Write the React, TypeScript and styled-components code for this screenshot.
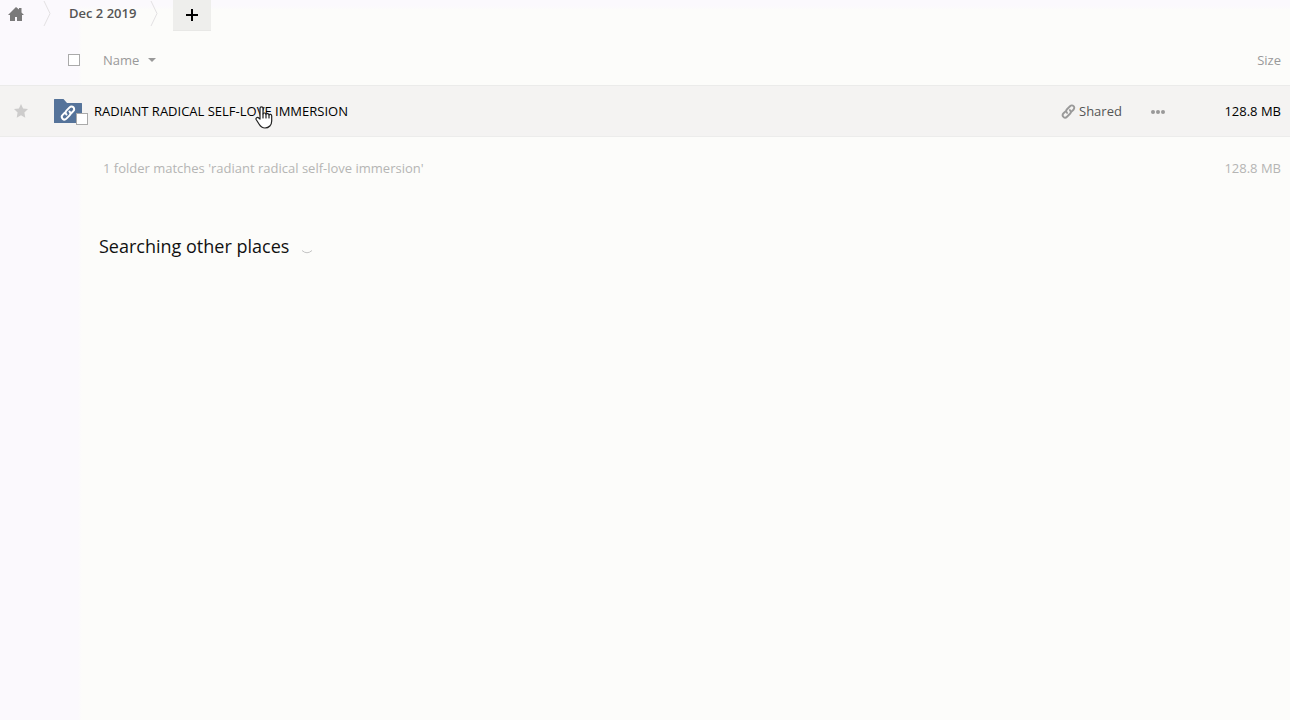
import React from 'react';
import styled, { createGlobalStyle } from 'styled-components';

const GlobalStyle = createGlobalStyle`
  * { box-sizing: border-box; }
  html { min-height: 100%; background: #fcfcfa; }
  body {
    margin: 0;
    min-height: 100vh;
    background: linear-gradient(90deg, #fbf9fd 0 78px, #fcfcfa 82px);
    color: #000;
    font: 13px/20px "Open Sans", "Noto Sans", sans-serif;
  }
`;

const Toolbar = styled.header`
  display: flex;
  align-items: flex-start;
  height: 36px;
  background: linear-gradient(180deg, #fbf9fd 0 6px, transparent 10px);
`;

const Breadcrumbs = styled.nav`
  display: flex;
  align-items: center;
  height: 28px;
`;

const CrumbLink = styled.a<{ $icon?: boolean }>`
  display: flex;
  align-items: center;
  padding: ${(p) => (p.$icon ? '0 19px 0 8px' : '0 14px 2px 16px')};
  color: #555;
  font-weight: 600;
  text-decoration: none;
`;

const AddButton = styled.button`
  display: flex;
  align-items: center;
  justify-content: center;
  width: 38px;
  height: 31px;
  margin-left: 13px;
  padding: 0;
  border: 0;
  border-bottom: 1px solid #e8e8e6;
  background: #eeeeec;
`;

const FileTable = styled.table`
  width: 100%;
  table-layout: fixed;
  border-collapse: separate;
  border-spacing: 0;
`;

const Col = styled.col<{ $width?: number }>`
  width: ${(p) => (p.$width ? `${p.$width}px` : 'auto')};
`;

const HeadCell = styled.th<{ $end?: boolean }>`
  height: 49px;
  padding: ${(p) => (p.$end ? '0 9px 2px 0' : '0 0 2px 14px')};
  color: #999;
  font-weight: 400;
  text-align: ${(p) => (p.$end ? 'right' : 'left')};
`;

const HeadContent = styled.div`
  display: flex;
  align-items: center;
  gap: 23px;
`;

const SortButton = styled.button`
  display: inline-flex;
  align-items: center;
  gap: 9px;
  padding: 0;
  border: 0;
  background: none;
  color: inherit;
  font: inherit;
`;

const Checkbox = styled.input`
  appearance: none;
  width: 12px;
  height: 12px;
  margin: 0;
  border: 1px solid #aaa;
  background: #fff;
`;

const FileRow = styled.tr`
  background: #f4f3f2;
`;

const Cell = styled.td<{ $end?: boolean }>`
  height: 52px;
  padding: ${(p) => (p.$end ? '0 9px 0 0' : '0')};
  border-top: 1px solid #ebebea;
  border-bottom: 1px solid #ececeb;
  text-align: ${(p) => (p.$end ? 'right' : 'left')};
`;

const IconButton = styled.button<{ $inset?: number }>`
  display: flex;
  margin: 0 0 0 ${(p) => p.$inset ?? 0}px;
  padding: 0;
  border: 0;
  background: none;
`;

const FileEntry = styled.div`
  display: flex;
  align-items: center;
  gap: 12px;
`;

const Thumbnail = styled.div`
  position: relative;
  display: flex;
  width: 28px;
`;

const ThumbnailCheckbox = styled(Checkbox)`
  position: absolute;
  left: 22px;
  top: 14px;
`;

const FileLink = styled.a`
  position: relative;
  color: #000;
  text-decoration: none;
`;

const Pointer = styled.svg`
  position: absolute;
  left: 161px;
  top: 5px;
`;

const ShareButton = styled.button`
  display: flex;
  align-items: center;
  gap: 3px;
  padding: 0;
  border: 0;
  background: none;
  color: #555;
  font: inherit;
`;

const SummaryCell = styled.td<{ $end?: boolean }>`
  height: 62px;
  padding: ${(p) => (p.$end ? '0 9px 0 0' : '0 0 0 49px')};
  color: #b5b5b4;
  text-align: ${(p) => (p.$end ? 'right' : 'left')};
`;

const SearchStatus = styled.section`
  display: flex;
  align-items: center;
  gap: 12px;
  padding: 35px 0 0 99px;
`;

const StatusTitle = styled.h2`
  margin: 0;
  color: #111;
  font-size: 18px;
  font-weight: 400;
  line-height: 24px;
`;

const Separator = () => (
  <svg width="10" height="28" viewBox="0 0 10 28" fill="none" stroke="#e3e1e3" aria-hidden="true">
    <path d="M1 1 7 13.5 1 26" />
  </svg>
);

const ChainLink = ({ size, color, weight }: { size: number; color: string; weight: number }) => (
  <svg width={size} height={size} viewBox="0 0 16 16" fill="none" stroke={color} strokeWidth={weight} strokeLinecap="round" aria-hidden="true">
    <path d="M6.5 9.5C5.2 8.2 5.4 6.6 6.4 5.6L9.6 2.4c1.2-1.2 2.8-1.1 3.8-.1s1.1 2.6-.1 3.8L11.2 8.2" />
    <path d="M9.5 6.5c1.3 1.3 1.1 2.9.1 3.9l-3.2 3.2c-1.2 1.2-2.8 1.1-3.8.1s-1.1-2.6.1-3.8l2.1-2.1" />
  </svg>
);

export default function App() {
  return (
    <>
      <GlobalStyle />
      <Toolbar>
        <Breadcrumbs aria-label="Breadcrumb">
          <CrumbLink $icon href="#home" aria-label="Home">
            <svg width="16" height="16" viewBox="0 0 16 16" fill="#7a7a7a" aria-hidden="true">
              <path d="M8 1 0 9h2v6h5v-4h2v4h5V9h2l-2.500-2.500V2h-2.500v1.500Z" />
            </svg>
          </CrumbLink>
          <Separator />
          <CrumbLink href="#folder">Dec 2 2019</CrumbLink>
          <Separator />
        </Breadcrumbs>
        <AddButton aria-label="New">
          <svg width="12" height="12" viewBox="0 0 12 12" stroke="#000" strokeWidth="2" aria-hidden="true">
            <path d="M6 0v12M0 6h12" />
          </svg>
        </AddButton>
      </Toolbar>
      <main>
        <FileTable>
          <colgroup>
            <Col $width={54} />
            <Col />
            <Col $width={89} />
            <Col $width={40} />
            <Col $width={100} />
          </colgroup>
          <thead>
            <tr>
              <HeadCell />
              <HeadCell>
                <HeadContent>
                  <Checkbox type="checkbox" aria-label="Select all" />
                  <SortButton>
                    Name
                    <svg width="8" height="4" viewBox="0 0 8 4" fill="#999" aria-hidden="true">
                      <path d="M0 0h8L4 4Z" />
                    </svg>
                  </SortButton>
                </HeadContent>
              </HeadCell>
              <HeadCell />
              <HeadCell />
              <HeadCell $end>
                <SortButton>Size</SortButton>
              </HeadCell>
            </tr>
          </thead>
          <tbody>
            <FileRow>
              <Cell>
                <IconButton $inset={14} aria-label="Add to favorites">
                  <svg width="14" height="14" viewBox="0 0 14 14" fill="#cdcccc" aria-hidden="true">
                    <path d="m7 0 2.1 4.5 4.9.6-3.6 3.4.9 5.2L7 11.3l-4.3 2.4.9-5.2L0 5.1l4.9-.6Z" />
                  </svg>
                </IconButton>
              </Cell>
              <Cell>
                <FileEntry>
                  <Thumbnail>
                    <svg width="28" height="24" viewBox="0 0 28 24" aria-hidden="true">
                      <path fill="#55739a" d="M0 .5Q0 0 .5 0H9.500l3.500 4h14.500Q28 4 28 4.500V23.500q0 .5-.5.5H.5Q0 24 0 23.500Z" />
                      <g transform="translate(6 6)">
                        <ChainLink size={16} color="#fff" weight={2} />
                      </g>
                    </svg>
                    <ThumbnailCheckbox type="checkbox" aria-label="Select RADIANT RADICAL SELF-LOVE IMMERSION" />
                  </Thumbnail>
                  <FileLink href="#radiant">
                    RADIANT RADICAL SELF-LOVE IMMERSION
                    <Pointer width="18" height="24" viewBox="0 0 18 24" fill="#fff" stroke="#222" strokeWidth="1.200" strokeLinejoin="round" strokeLinecap="round" aria-hidden="true">
                      <path d="M5 13V2.500C5 .3 8 .3 8 2.500V8c.5-1.500 2.800-1.200 3 .3.500-1.200 2.700-.9 3 .6.600-1 2.700-.6 2.700 1.100V15c0 4-2.700 7-6.700 7-3 0-4.500-1.500-6-4l-2.700-4.200C.2 12 2.500 10.700 3.800 12Z" />
                      <path d="M8 8v4M11 8.500V12M14 9v3" />
                    </Pointer>
                  </FileLink>
                </FileEntry>
              </Cell>
              <Cell>
                <ShareButton>
                  <ChainLink size={15} color="#999" weight={2} />
                  Shared
                </ShareButton>
              </Cell>
              <Cell>
                <IconButton aria-label="More actions">
                  <svg width="16" height="6" viewBox="0 0 16 6" fill="#999" aria-hidden="true">
                    <circle cx="3" cy="4" r="2" />
                    <circle cx="8" cy="4" r="2" />
                    <circle cx="13" cy="4" r="2" />
                  </svg>
                </IconButton>
              </Cell>
              <Cell $end>128.8 MB</Cell>
            </FileRow>
          </tbody>
          <tfoot>
            <tr>
              <td />
              <SummaryCell colSpan={3}>1 folder matches 'radiant radical self-love immersion'</SummaryCell>
              <SummaryCell $end>128.8 MB</SummaryCell>
            </tr>
          </tfoot>
        </FileTable>
        <SearchStatus role="status">
          <StatusTitle>Searching other places</StatusTitle>
          <svg width="12" height="20" viewBox="0 0 12 20" fill="none" stroke="#c4c4c4" aria-hidden="true">
            <path d="M1 14.500Q6 19 11 14.500" />
          </svg>
        </SearchStatus>
      </main>
    </>
  );
}
